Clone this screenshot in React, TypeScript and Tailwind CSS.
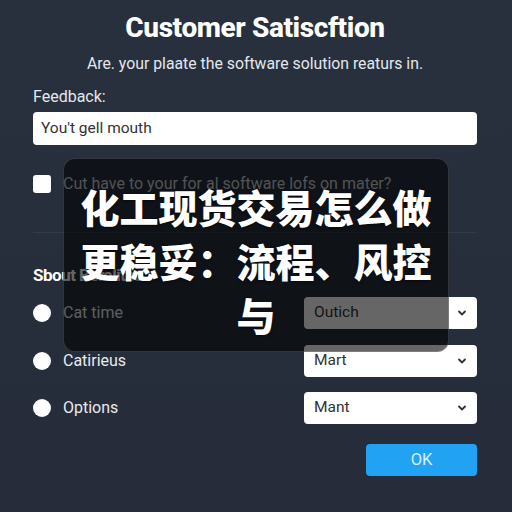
import React from "react";

function Chevron() {
  return (
    <svg width="10" height="10" viewBox="0 0 10 10" className="text-[#333]">
      <path d="M2 3.5 L5 6.5 L8 3.5" fill="none" stroke="currentColor" strokeWidth="1.8" strokeLinecap="round" strokeLinejoin="round" />
    </svg>
  );
}

function Row({ label, value }: { label: string; value: string }) {
  return (
    <div className="flex items-center h-[32px]">
      <div className="w-[18px] h-[18px] rounded-full bg-white" />
      <span className="ml-[12px] text-[16px] text-[#e8eaee] flex-1">{label}</span>
      <div className="w-[173px] h-[32px] bg-white rounded-[4px] flex items-center justify-between pl-[10px] pr-[10px]">
        <span className="text-[15.5px] text-[#333]">{value}</span>
        <Chevron />
      </div>
    </div>
  );
}

export default function App() {
  return (
    <div
      className="relative w-[512px] h-[512px] overflow-hidden bg-gradient-to-b from-[#28303e] to-[#262c39]"
      style={{ fontFamily: "Roboto, 'Noto Sans', sans-serif" }}
    >
      <div className="flex flex-col pl-[33px] pr-[35px]">
        <h1 className="mt-[12px] h-[32px] leading-[32px] text-center text-[28px] font-extrabold text-white tracking-[-0.4px]">
          Customer Satiscftion
        </h1>
        <p className="mt-[10px] h-[20px] leading-[20px] text-center text-[15.8px] text-[#e4e7ec]">
          Are. your plaate the software solution reaturs in.
        </p>
        <label className="mt-[13px] h-[20px] leading-[20px] text-[16px] text-[#e4e7ec]">Feedback:</label>
        <div className="mt-[5px] h-[33px] bg-white rounded-[4px] flex items-center pl-[8px]">
          <span className="text-[15.5px] text-[#333]">You't gell mouth</span>
        </div>
        <div className="mt-[30px] flex items-center h-[18px]">
          <div className="w-[18px] h-[18px] rounded-[3px] bg-white" />
          <span className="ml-[12px] text-[16px] text-[#c9ccd2]">Cut have to your for al software lofs on mater?</span>
        </div>
        <div className="mt-[39px] h-px bg-[#343b48]" />
        <h2 className="mt-[31px] h-[22px] leading-[22px] text-[17px] font-bold text-white tracking-[-0.5px]">Sbout Beraliteu</h2>
        <div className="mt-[11px] flex flex-col gap-[15.5px]">
          <Row label="Cat time" value="Outich" />
          <Row label="Catirieus" value="Mart" />
          <Row label="Options" value="Mant" />
        </div>
        <div className="mt-[20px] flex justify-end">
          <button className="w-[111px] h-[32px] rounded-[4px] bg-[#22a2f2] text-[16.5px] text-[#d6f1ff]">OK</button>
        </div>
      </div>

      <div
        className="absolute left-[63px] top-[158px] w-[386px] h-[194px] rounded-[12px] bg-black/60 border border-white/15 pt-[20px] text-center text-white font-black text-[39px] leading-[54px]"
        style={{ fontFamily: "'Noto Sans CJK SC', sans-serif", textShadow: "0 1px 3px rgba(0,0,0,0.6)" }}
      >
        化工现货交易怎么做
        <br />
        更稳妥：流程、风控
        <br />
        与
      </div>
    </div>
  );
}
